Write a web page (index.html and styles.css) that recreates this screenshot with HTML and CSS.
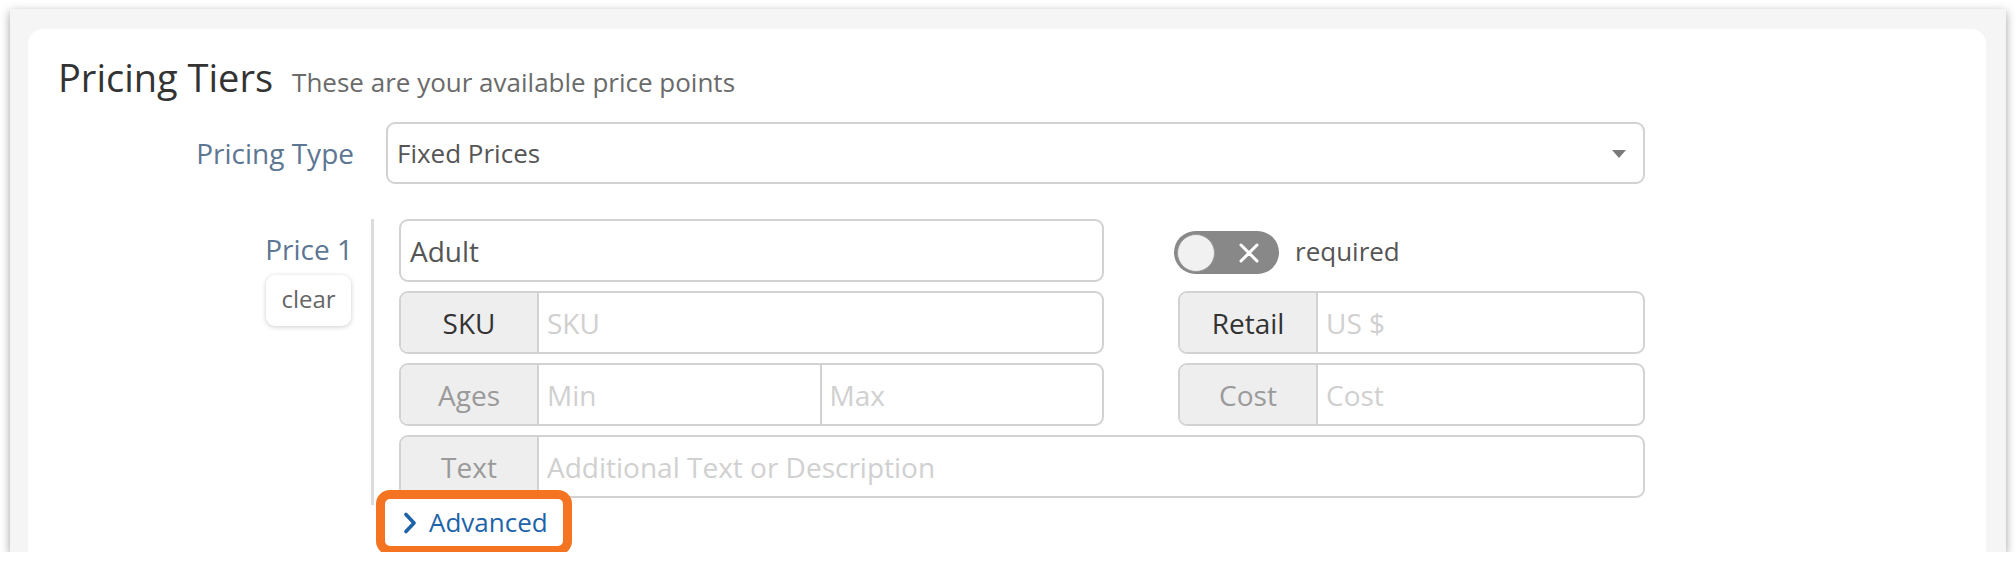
FILE: index.html
```html
<!DOCTYPE html>
<html lang="en">
<head>
<meta charset="utf-8">
<title>Pricing Tiers</title>
<link rel="stylesheet" href="styles.css">
</head>
<body>
<div class="window">
  <div class="card">
    <div class="heading">
      <h3 class="title">Pricing Tiers</h3>
      <span class="subtitle">These are your available price points</span>
    </div>

    <div class="type-row">
      <label class="row-label">Pricing Type</label>
      <div class="select">
        <span class="select-text">Fixed Prices</span>
        <span class="caret"></span>
      </div>
    </div>

    <div class="tier">
      <div class="tier-side">
        <div class="row-label tier-label">Price 1</div>
        <button class="clear">clear</button>
      </div>
      <div class="tier-body">
        <div class="field name-field">Adult</div>
        <div class="req">
          <span class="toggle">
            <span class="knob"></span>
            <svg class="toggle-x" width="22" height="20" viewBox="0 0 22 20"><path d="M3 2 L19 18 M19 2 L3 18" stroke="#fff" stroke-width="3" stroke-linecap="round" fill="none"/></svg>
          </span>
          <span class="req-text">required</span>
        </div>

        <div class="group"><span class="addon dark">SKU</span><span class="ph">SKU</span></div>
        <div class="group"><span class="addon dark">Retail</span><span class="ph">US $</span></div>

        <div class="group"><span class="addon">Ages</span><span class="ph">Min</span><span class="ph divided">Max</span></div>
        <div class="group"><span class="addon">Cost</span><span class="ph">Cost</span></div>

        <div class="group wide"><span class="addon">Text</span><span class="ph">Additional Text or Description</span></div>
      </div>
    </div>

    <div class="adv-row">
      <a class="advanced">
        <svg class="chev" width="14" height="22" viewBox="0 0 14 22"><path d="M3 2.5 L11 11 L3 19.5" stroke="#1d63a9" stroke-width="3.6" stroke-linecap="round" stroke-linejoin="round" fill="none"/></svg>
        <span>Advanced</span>
      </a>
    </div>
  </div>
</div>
</body>
</html>
```

FILE: styles.css
```css
* { box-sizing: border-box; }

body {
  margin: 0;
  background: #ffffff;
  font-family: "Open Sans", "Liberation Sans", sans-serif;
}

.window {
  margin: 9px 0 0 10px;
  width: 1996px;
  height: 543px;
  padding: 20px 20px 0 18px;
  background: #f5f5f5;
  box-shadow: 0 3px 9px rgba(0, 0, 0, 0.38);
}

.card {
  height: 523px;
  padding: 28px 0 0 30px;
  background: #ffffff;
  border-radius: 15px 15px 0 0;
}

.heading {
  display: flex;
  align-items: baseline;
  gap: 19px;
  height: 40px;
}

.title {
  margin: 0;
  font-size: 38px;
  line-height: 40px;
  font-weight: 400;
  color: #333333;
}

.subtitle {
  font-size: 26px;
  color: #6a6a6a;
}

.type-row {
  display: flex;
  align-items: center;
  gap: 32px;
  margin-top: 25px;
}

.row-label {
  width: 296px;
  text-align: right;
  font-size: 28px;
  line-height: 38px;
  color: #5d7693;
}

.select {
  width: 1259px;
  height: 62px;
  border: 2px solid #d2d2d2;
  border-radius: 9px;
  display: flex;
  align-items: center;
  justify-content: space-between;
  padding: 0 17px 0 9px;
}

.select-text {
  font-size: 26px;
  color: #555555;
}

.caret {
  width: 0;
  height: 0;
  border-left: 7.5px solid transparent;
  border-right: 7.5px solid transparent;
  border-top: 8px solid #7a7a7a;
  margin-top: 2px;
}

.tier {
  display: flex;
  margin-top: 35px;
}

.tier-side {
  width: 293px;
  padding-top: 11px;
  display: flex;
  flex-direction: column;
  align-items: flex-end;
}

.tier-label {
  width: auto;
  margin-right: -2px;
}

.clear {
  margin-top: 7px;
  width: 85px;
  height: 51px;
  border: none;
  border-radius: 9px;
  background: #ffffff;
  box-shadow: 0 1px 5px rgba(0, 0, 0, 0.2);
  font-family: "Open Sans", "Liberation Sans", sans-serif;
  font-size: 24px;
  color: #666666;
  padding: 0 0 4px 0;
}

.tier-body {
  margin-left: 20px;
  border-left: 3px solid #dcdcdc;
  padding: 0 0 7px 25px;
  display: grid;
  grid-template-columns: 705px 467px;
  column-gap: 74px;
  grid-auto-rows: 63px;
  row-gap: 9px;
}

.field {
  border: 2px solid #d2d2d2;
  border-radius: 9px;
  display: flex;
  align-items: center;
  padding: 0 9px;
  font-size: 28px;
  color: #555555;
}

.req {
  display: flex;
  align-items: center;
  gap: 16px;
  margin-left: -4px;
  padding-top: 4px;
}

.toggle {
  position: relative;
  width: 105px;
  height: 43px;
  border-radius: 22px;
  background: #888888;
  display: flex;
  align-items: center;
  padding-left: 3px;
}

.knob {
  width: 38px;
  height: 38px;
  border-radius: 50%;
  background: #f1f1f1;
  border: 1px solid #9a9a9a;
}

.toggle-x {
  margin-left: 23px;
}

.req-text {
  font-size: 26px;
  color: #555555;
  margin-top: -4px;
}

.group {
  display: flex;
  border: 2px solid #d2d2d2;
  border-radius: 9px;
  overflow: hidden;
}

.group.wide {
  grid-column: 1 / 3;
}

.addon {
  width: 138px;
  flex: none;
  background: #eeeeee;
  border-right: 2px solid #d2d2d2;
  display: flex;
  align-items: center;
  justify-content: center;
  font-size: 28px;
  color: #9a9a9a;
}

.addon.dark {
  color: #333333;
}

.ph {
  flex: 1;
  display: flex;
  align-items: center;
  padding: 0 8px;
  font-size: 28px;
  color: #d0d0d0;
}

.ph.divided {
  border-left: 2px solid #d2d2d2;
}

.adv-row {
  margin-top: -1px;
  padding-left: 345px;
}

.advanced {
  position: relative;
  display: inline-flex;
  align-items: center;
  gap: 12px;
  font-size: 26px;
  line-height: 36px;
  color: #1d63a9;
  cursor: pointer;
}

.advanced::before {
  content: "";
  position: absolute;
  left: -27px;
  top: -14px;
  right: -24px;
  bottom: -15px;
  border: 9px solid #f47421;
  border-radius: 14px;
}

.chev {
  margin-top: 2px;
}
```
